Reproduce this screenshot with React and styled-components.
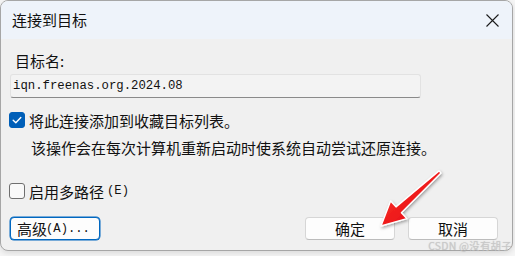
import styled, { createGlobalStyle } from "styled-components";

const GlobalStyle = createGlobalStyle`
  html, body {
    margin: 0;
    padding: 0;
    background: #f6f6f6;
  }
  body {
    width: 515px;
    height: 256px;
    overflow: hidden;
  }
`;

const Stage = styled.div`
  position: relative;
  width: 515px;
  height: 256px;
`;

const Window = styled.div`
  box-sizing: border-box;
  width: 513px;
  height: 251px;
  border: 1px solid #a6a6a6;
  border-radius: 8px;
  overflow: hidden;
  background: #f0f0f0;
  display: flex;
  flex-direction: column;
  box-shadow: 0 2px 6px rgba(0, 0, 0, 0.12);
  font-family: "Noto Sans CJK SC", "Noto Sans", sans-serif;
  color: #111;
`;

const TitleBar = styled.div`
  height: 38px;
  flex-shrink: 0;
  background: #eef3fa;
  display: flex;
  align-items: center;
  justify-content: space-between;
  padding: 0 13px 0 11px;
`;

const Title = styled.span`
  font-size: 15px;
  line-height: 20px;
`;

const CloseButton = styled.div`
  width: 14px;
  height: 14px;
  display: flex;
  align-items: center;
  justify-content: center;
`;

const Body = styled.div`
  display: flex;
  flex-direction: column;
  padding: 12px 14px 0 8px;
`;

const Label = styled.div`
  font-size: 15px;
  line-height: 20px;
  padding-left: 6px;
  margin-bottom: 3px;
`;

const Input = styled.div`
  box-sizing: border-box;
  margin-left: 1px;
  width: 411px;
  height: 24px;
  background: #f3f3f3;
  border: 1px solid #e2e2e2;
  border-bottom: 1px solid #8a8a8a;
  border-radius: 3px;
  display: flex;
  align-items: center;
  padding-left: 2px;
  font-family: "Liberation Mono", monospace;
  font-size: 12.3px;
  color: #111;
`;

const CheckRow = styled.div`
  display: flex;
  align-items: center;
  gap: 4px;
  height: 20px;
  margin-top: ${(p) => p.$top}px;
  font-size: 15px;
`;

const Box = styled.div`
  box-sizing: border-box;
  width: 16px;
  height: 16px;
  border-radius: 3px;
  display: flex;
  align-items: center;
  justify-content: center;
  background: ${(p) => (p.$checked ? "#005fb8" : "#f9f9f9")};
  border: 1px solid ${(p) => (p.$checked ? "#005fb8" : "#6f6f6f")};
`;

const Latin = styled.span`
  font-family: "Liberation Mono", monospace;
  font-size: 12.2px;
  margin-left: -1px;
`;

const Note = styled.div`
  font-size: 15px;
  line-height: 20px;
  margin-top: 8px;
  padding-left: 22px;
`;

const ButtonRow = styled.div`
  display: flex;
  align-items: center;
  margin-top: 16px;
  padding-left: 1px;
`;

const Spacer = styled.div`
  flex: 1;
`;

const Button = styled.div`
  box-sizing: border-box;
  width: 90px;
  height: 23px;
  border-radius: 4px;
  background: #fdfdfd;
  border: 1px solid ${(p) => (p.$focus ? "#0067c0" : "#d6d6d6")};
  border-bottom-color: ${(p) => (p.$focus ? "#0067c0" : "#bcbcbc")};
  box-shadow: ${(p) => (p.$focus ? "0 0 0 0.5px #0067c0" : "none")};
  display: flex;
  align-items: center;
  justify-content: ${(p) => (p.$left ? "flex-start" : "center")};
  padding-left: ${(p) => (p.$left ? "6px" : "0")};
  font-size: 15px;
  margin-left: ${(p) => p.$gap || 0}px;
`;

const Overlay = styled.svg`
  position: absolute;
  left: 0;
  top: 0;
  pointer-events: none;
`;

const Watermark = styled.div`
  position: absolute;
  right: 3px;
  bottom: 4px;
  font-family: "Noto Sans CJK SC", "Liberation Sans", sans-serif;
  font-size: 10.5px;
  line-height: 12px;
  color: rgba(200, 200, 200, 0.85);
  text-shadow: 0 0 1px rgba(120, 120, 120, 0.35);
  letter-spacing: 0.2px;
`;

function CheckMark() {
  return (
    <svg width="12" height="12" viewBox="0 0 12 12">
      <path d="M2.2 6.2 L4.8 8.7 L9.8 3.4" fill="none" stroke="#fff" strokeWidth="1.4" strokeLinecap="round" strokeLinejoin="round" />
    </svg>
  );
}

export default function App() {
  return (
    <>
      <GlobalStyle />
      <Stage>
        <Window>
          <TitleBar>
            <Title>连接到目标</Title>
            <CloseButton>
              <svg width="13" height="13" viewBox="0 0 13 13">
                <path d="M0.5 0.5 L12.5 12.5 M12.5 0.5 L0.5 12.5" stroke="#1b1b1b" strokeWidth="1.1" />
              </svg>
            </CloseButton>
          </TitleBar>
          <Body>
            <Label>目标名:</Label>
            <Input>iqn.freenas.org.2024.08</Input>
            <CheckRow $top={12}>
              <Box $checked>
                <CheckMark />
              </Box>
              将此连接添加到收藏目标列表。
            </CheckRow>
            <Note>该操作会在每次计算机重新启动时使系统自动尝试还原连接。</Note>
            <CheckRow $top={23}>
              <Box />
              启用多路径<Latin>(E)</Latin>
            </CheckRow>
            <ButtonRow>
              <Button $focus $left>
                高级<Latin>(A)...</Latin>
              </Button>
              <Spacer />
              <Button>确定</Button>
              <Button $gap={13}>取消</Button>
            </ButtonRow>
          </Body>
        </Window>
        <Overlay width="515" height="256" viewBox="0 0 515 256">
          <defs>
            <filter id="shadow" x="-20%" y="-20%" width="140%" height="140%">
              <feDropShadow dx="1" dy="1.5" stdDeviation="1.5" floodColor="#000" floodOpacity="0.35" />
            </filter>
            <linearGradient id="red" x1="0" y1="0" x2="1" y2="1">
              <stop offset="0" stopColor="#ff3b30" />
              <stop offset="1" stopColor="#e0000b" />
            </linearGradient>
          </defs>
          <polygon
            points="381,226 406.8,218.6 401.4,212.7 441,173.1 439,170.9 396,206.9 390.6,201"
            fill="url(#red)"
            stroke="#fff"
            strokeWidth="1.4"
            strokeLinejoin="round"
            filter="url(#shadow)"
          />
        </Overlay>
        <Watermark>CSDN @没有胡子</Watermark>
      </Stage>
    </>
  );
}
